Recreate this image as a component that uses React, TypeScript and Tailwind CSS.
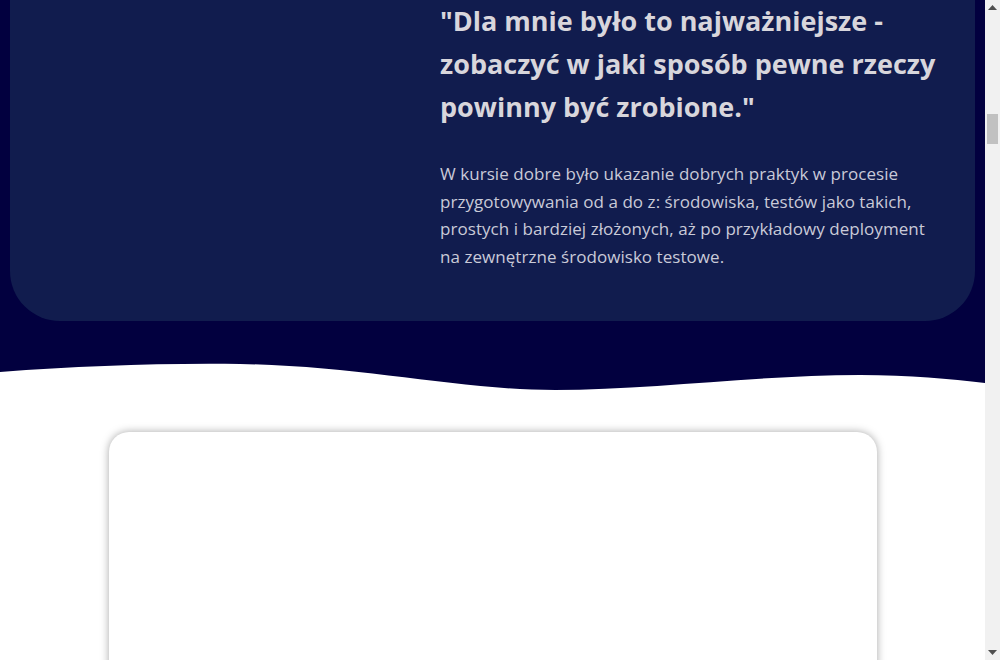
import React from 'react';

const font = { fontFamily: '"Open Sans", "DejaVu Sans", sans-serif' };

const Wave = () => (
    <svg className="block w-full h-[40px]" viewBox="0 0 985 40" preserveAspectRatio="none">
        <path
            d="M0,12 C80,6 160,3 240,4 C360,6 460,30 555,30 C650,30 760,15 860,15 C910,15 950,19 985,23 L985,40 L0,40 Z"
            fill="#ffffff"
        />
    </svg>
);

// the page's own scrollbar, scrolled part-way down
const Scrollbar = () => (
    <div className="w-[15px] shrink-0 bg-[#f1f1f1] flex flex-col items-center">
        <svg className="mt-[5px]" width="9" height="5" viewBox="0 0 9 5">
            <path d="M0,5 L4.5,0 L9,5 Z" fill="#505050" />
        </svg>
        <div className="mt-[104px] w-[11px] h-[30px] bg-[#c1c1c1]" />
        <div className="flex-1" />
        <svg className="mb-[5px]" width="9" height="5" viewBox="0 0 9 5">
            <path d="M0,0 L9,0 L4.5,5 Z" fill="#505050" />
        </svg>
    </div>
);

export default function App() {
    return (
        <div className="h-[660px] flex overflow-hidden bg-white" style={font}>
            <div className="flex-1 min-w-0">
                <section className="bg-[#02003f] pb-[39px]">
                    <div className="mx-[10px] bg-[#111c4e] rounded-b-[50px] flex pb-[51px]">
                        <div className="flex-1" />
                        <div className="w-[505px] mr-[30px]">
                            <h2 className="text-[27px] leading-[43px] font-bold text-[#d8d6dc] -mt-[1px]">
                                "Dla mnie było to najważniejsze -<br />
                                zobaczyć w jaki sposób pewne rzeczy<br />
                                powinny być zrobione."
                            </h2>
                            <p className="mt-[32px] text-[17px] tracking-[0.05px] leading-[27.5px] text-[#c9cad8]">
                                W kursie dobre było ukazanie dobrych praktyk w procesie<br />
                                przygotowywania od a do z: środowiska, testów jako takich,<br />
                                prostych i bardziej złożonych, aż po przykładowy deployment<br />
                                na zewnętrzne środowisko testowe.
                            </p>
                        </div>
                    </div>
                </section>
                <div className="bg-[#02003f]">
                    <Wave />
                </div>
                <section className="pt-[32px] px-4">
                    <div className="max-w-[768px] mx-auto h-[600px] bg-white rounded-[20px] shadow-[0_0_8px_rgba(0,0,0,0.35)]" />
                </section>
            </div>
            <Scrollbar />
        </div>
    );
}
